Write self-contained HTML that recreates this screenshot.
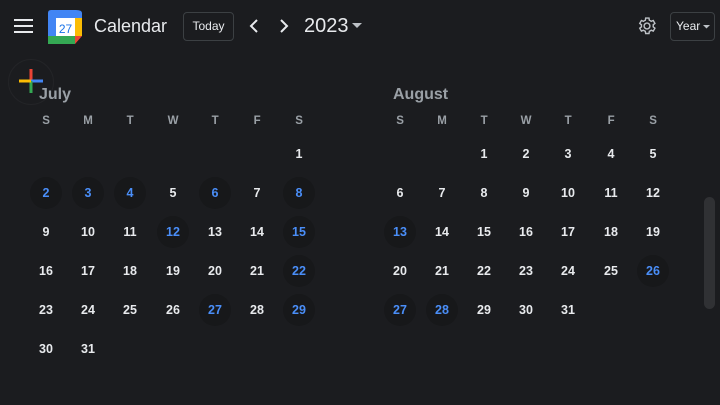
<!DOCTYPE html>
<html><head><meta charset="utf-8"><style>
*{margin:0;padding:0;box-sizing:border-box}
body{width:720px;height:405px;overflow:hidden;background:#1b1c1f;font-family:"Liberation Sans",sans-serif;color:#e8eaed;position:relative}
.a{position:absolute}
.title{position:absolute;top:86px;font-size:16px;font-weight:bold;color:#9aa0a6}
.dh{position:absolute;top:115px;width:42.2px;text-align:center;font-size:11.5px;font-weight:bold;color:#9aa0a6}
.d{position:absolute;width:32px;height:32px;line-height:33px;text-align:center;font-size:12.5px;font-weight:bold;color:#e8eaed;border-radius:50%;margin-top:1px}
.b{color:#4a8ef8;background:#17181a}
.btn{position:absolute;border:1px solid #3c4043;border-radius:4px;color:#e8eaed;font-size:12px;text-align:center}
</style></head><body>
<div class="a" style="left:14px;top:19px;width:19px;height:2px;background:#e8eaed;box-shadow:0 6px 0 #e8eaed,0 12px 0 #e8eaed"></div>
<svg class="a" style="left:48px;top:10px" width="34" height="34" viewBox="0 0 34 34">
<path d="M3 0H28Q34 0 34 3V26H27V34H3Q0 34 0 31V3Q0 0 3 0Z" fill="#4285f4"/>
<rect x="0" y="26" width="27" height="8" fill="#34a853"/>
<rect x="27" y="8" width="7" height="18" fill="#fbbc04"/>
<path d="M27 26H34L27 34Z" fill="#ea4335"/>
<rect x="8" y="8" width="19" height="18" fill="#fff"/>
<text x="17.5" y="23" text-anchor="middle" font-family="Liberation Sans" font-size="12" fill="#1a73e8">27</text>
</svg>
<div class="a" style="left:94px;top:16px;font-size:18px;color:#e8eaed">Calendar</div>
<div class="btn" style="left:183px;top:12px;width:51px;height:29px;line-height:27px">Today</div>
<svg class="a" style="left:246px;top:18px" width="16" height="16"><path d="M11 2L5 8L11 14" stroke="#e8eaed" stroke-width="2" fill="none"/></svg>
<svg class="a" style="left:276px;top:18px" width="16" height="16"><path d="M5 2L11 8L5 14" stroke="#e8eaed" stroke-width="2" fill="none"/></svg>
<div class="a" style="left:304px;top:15px;font-size:20px;color:#e8eaed">2023</div>
<svg class="a" style="left:352px;top:23px" width="10" height="6"><path d="M0 0H10L5 5Z" fill="#bdc1c6"/></svg>
<svg class="a" style="left:637px;top:16px" width="20" height="20" viewBox="0 0 24 24"><path d="M12 15.5A3.5 3.5 0 1 1 12 8.5A3.5 3.5 0 1 1 12 15.5ZM19.4 13l2.1 1.6-2 3.5-2.5-1a7.6 7.6 0 0 1-2.2 1.3L14.4 21h-4l-.4-2.6a7.6 7.6 0 0 1-2.2-1.3l-2.5 1-2-3.5L5.4 13a7.6 7.6 0 0 1 0-2.5L3.3 8.9l2-3.5 2.5 1A7.6 7.6 0 0 1 10 5.1L10.4 2.5h4l.4 2.6A7.6 7.6 0 0 1 17 6.4l2.5-1 2 3.5-2.1 1.6a7.6 7.6 0 0 1 0 2.5Z" stroke="#bdc1c6" stroke-width="1.7" fill="none"/></svg>
<div class="btn" style="left:670px;top:12px;width:45px;height:29px;line-height:27px;text-align:left;padding-left:5px">Year</div>
<svg class="a" style="left:703px;top:25px" width="7" height="4"><path d="M0 0H7L3.5 3.5Z" fill="#bdc1c6"/></svg>
<div class="a" style="left:8px;top:59px;width:46px;height:46px;border-radius:50%;border:1px solid #232427"></div>
<svg class="a" style="left:19px;top:69px" width="24" height="24" viewBox="0 0 24 24">
<rect x="10.5" y="0" width="3" height="12" fill="#ea4335"/>
<rect x="12" y="10.5" width="12" height="3" fill="#4285f4"/>
<rect x="10.5" y="12" width="3" height="12" fill="#34a853"/>
<rect x="0" y="10.5" width="12" height="3" fill="#fbbc04"/>
</svg>
<div class="a" style="left:704px;top:197px;width:11px;height:112px;border-radius:6px;background:#303134"></div>

<div class="title" style="left:39px">July</div>
<div class="title" style="left:393px">August</div>

<div class="dh" style="left:25px">S</div><div class="dh" style="left:67px">M</div><div class="dh" style="left:109px">T</div><div class="dh" style="left:152px">W</div><div class="dh" style="left:194px">T</div><div class="dh" style="left:236px">F</div><div class="dh" style="left:278px">S</div>
<div class="dh" style="left:379px">S</div><div class="dh" style="left:421px">M</div><div class="dh" style="left:463px">T</div><div class="dh" style="left:505px">W</div><div class="dh" style="left:547px">T</div><div class="dh" style="left:590px">F</div><div class="dh" style="left:632px">S</div>

<div class="d" style="left:283px;top:137px">1</div>
<div class="d b" style="left:30px;top:176px">2</div><div class="d b" style="left:72px;top:176px">3</div><div class="d b" style="left:114px;top:176px">4</div><div class="d" style="left:157px;top:176px">5</div><div class="d b" style="left:199px;top:176px">6</div><div class="d" style="left:241px;top:176px">7</div><div class="d b" style="left:283px;top:176px">8</div>
<div class="d" style="left:30px;top:215px">9</div><div class="d" style="left:72px;top:215px">10</div><div class="d" style="left:114px;top:215px">11</div><div class="d b" style="left:157px;top:215px">12</div><div class="d" style="left:199px;top:215px">13</div><div class="d" style="left:241px;top:215px">14</div><div class="d b" style="left:283px;top:215px">15</div>
<div class="d" style="left:30px;top:254px">16</div><div class="d" style="left:72px;top:254px">17</div><div class="d" style="left:114px;top:254px">18</div><div class="d" style="left:157px;top:254px">19</div><div class="d" style="left:199px;top:254px">20</div><div class="d" style="left:241px;top:254px">21</div><div class="d b" style="left:283px;top:254px">22</div>
<div class="d" style="left:30px;top:293px">23</div><div class="d" style="left:72px;top:293px">24</div><div class="d" style="left:114px;top:293px">25</div><div class="d" style="left:157px;top:293px">26</div><div class="d b" style="left:199px;top:293px">27</div><div class="d" style="left:241px;top:293px">28</div><div class="d b" style="left:283px;top:293px">29</div>
<div class="d" style="left:30px;top:332px">30</div><div class="d" style="left:72px;top:332px">31</div>

<div class="d" style="left:468px;top:137px">1</div><div class="d" style="left:510px;top:137px">2</div><div class="d" style="left:552px;top:137px">3</div><div class="d" style="left:595px;top:137px">4</div><div class="d" style="left:637px;top:137px">5</div>
<div class="d" style="left:384px;top:176px">6</div><div class="d" style="left:426px;top:176px">7</div><div class="d" style="left:468px;top:176px">8</div><div class="d" style="left:510px;top:176px">9</div><div class="d" style="left:552px;top:176px">10</div><div class="d" style="left:595px;top:176px">11</div><div class="d" style="left:637px;top:176px">12</div>
<div class="d b" style="left:384px;top:215px">13</div><div class="d" style="left:426px;top:215px">14</div><div class="d" style="left:468px;top:215px">15</div><div class="d" style="left:510px;top:215px">16</div><div class="d" style="left:552px;top:215px">17</div><div class="d" style="left:595px;top:215px">18</div><div class="d" style="left:637px;top:215px">19</div>
<div class="d" style="left:384px;top:254px">20</div><div class="d" style="left:426px;top:254px">21</div><div class="d" style="left:468px;top:254px">22</div><div class="d" style="left:510px;top:254px">23</div><div class="d" style="left:552px;top:254px">24</div><div class="d" style="left:595px;top:254px">25</div><div class="d b" style="left:637px;top:254px">26</div>
<div class="d b" style="left:384px;top:293px">27</div><div class="d b" style="left:426px;top:293px">28</div><div class="d" style="left:468px;top:293px">29</div><div class="d" style="left:510px;top:293px">30</div><div class="d" style="left:552px;top:293px">31</div>
</body></html>
